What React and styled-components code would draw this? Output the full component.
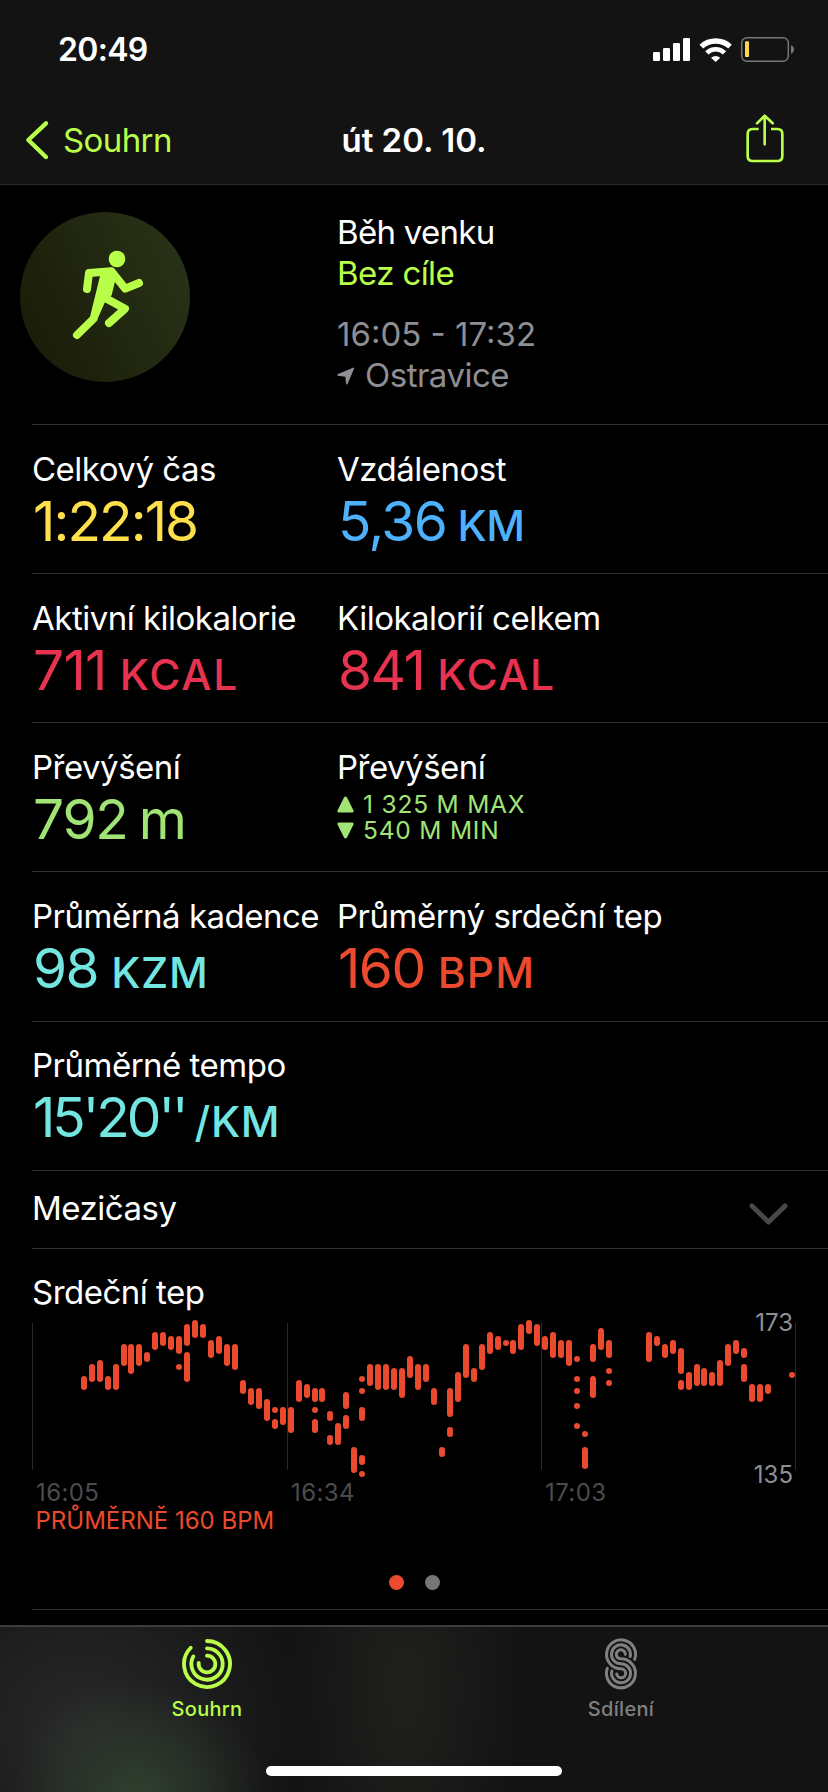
import React, { useState } from "react";
import styled, { createGlobalStyle, css } from "styled-components";

const GlobalStyle = createGlobalStyle`
  * {
    box-sizing: border-box;
  }
  body {
    margin: 0;
    background: #000;
    font-family: Inter, "Liberation Sans", sans-serif;
    color: #fff;
  }
`

const colors = {
  lime: '#b9ff4a',
  yellow: '#fde04c',
  blue: '#4db1fb',
  pink: '#e83350',
  green: '#a0e475',
  cyan: '#74e6e2',
  red: '#eb4a2e',
  gray: '#8e8e93',
}

const Screen = styled.div`
  width: 828px;
  height: 1792px;
  display: flex;
  flex-direction: column;
  overflow: hidden;
  background: #000;
`

const Header = styled.header`
  height: 185px;
  background: #131313;
  border-bottom: 1px solid #2a2a2a;
`

const StatusBar = styled.div`
  height: 96px;
  padding: 30px 33px 0 58px;
  display: flex;
  justify-content: space-between;
  align-items: flex-start;
`

const Clock = styled.span`
  font-size: 32px;
  font-weight: 600;
  line-height: 40px;
  letter-spacing: -0.7px;
`

const StatusIcons = styled.div`
  display: flex;
  align-items: center;
  gap: 8.5px;
  padding-top: 6px;
`

const NavBar = styled.div`
  height: 88px;
  padding: 0 42px 0 24px;
  display: grid;
  grid-template-columns: 1fr auto 1fr;
  align-items: center;
`

const BackButton = styled.button`
  display: flex;
  align-items: center;
  gap: 13px;
  padding: 0;
  border: 0;
  background: none;
  color: ${colors.lime};
  font: 400 33px/40px Inter, sans-serif;
  letter-spacing: -0.6px;
`

const Title = styled.h1`
  margin: 0;
  padding-left: 18px;
  font-size: 33px;
  font-weight: 600;
  line-height: 40px;
`

const ShareButton = styled.button`
  justify-self: end;
  display: flex;
  padding: 0 0 5px;
  border: 0;
  background: none;
`

const Hero = styled.section`
  height: 239px;
  display: grid;
  grid-template-columns: 317px 1fr;
  padding-left: 20px;
`

const Badge = styled.div`
  width: 170px;
  height: 170px;
  margin-top: 27px;
  border-radius: 50%;
  background: linear-gradient(65deg, #1a1c08 10%, #283218 90%);
`

const HeroText = styled.div`
  padding-top: 27px;
`

const Line = styled.div`
  display: flex;
  align-items: center;
  gap: 11px;
  font-size: 33px;
  line-height: 41px;
  letter-spacing: ${({ $spacing }) => $spacing ?? -0.7}px;
  color: ${({ $color }) => $color || '#fff'};
  ${({ $gap }) => $gap && css`
    margin-top: 20px;
  `}
`

const Row = styled.section`
  height: ${({ $height }) => $height || 149}px;
  margin-left: 32px;
  padding-top: ${({ $top }) => $top || 24}px;
  border-top: 1px solid #303031;
  display: grid;
  grid-template-columns: 305px 1fr;
`

const Label = styled.div`
  font-size: 33px;
  line-height: 40px;
  letter-spacing: -0.5px;
  white-space: nowrap;
`

const Value = styled.div`
  margin-top: 2px;
  padding-left: 1px;
  font-size: 55px;
  line-height: 60px;
  letter-spacing: ${({ $spacing }) => $spacing ?? -1.5}px;
  white-space: nowrap;
  color: ${({ $color }) => $color};
`

const Unit = styled.span`
  margin-left: ${({ $gap }) => $gap ?? 13}px;
  font-size: ${({ $large }) => $large ? 55 : 42.5}px;
  font-weight: ${({ $large }) => $large ? 400 : 500};
  letter-spacing: ${({ $spacing }) => $spacing ?? 0.7}px;
`

const Ranges = styled.div`
  padding-top: 4px;
`

const Range = styled.div`
  display: flex;
  align-items: center;
  gap: 9px;
  height: 26px;
  font-size: 24.5px;
  line-height: 26px;
  letter-spacing: 0.8px;
  color: ${colors.green};
`

const Splits = styled.section`
  height: 78px;
  margin-left: 32px;
  padding: 17px 40px 0 0;
  border-top: 1px solid #303031;
  display: flex;
  justify-content: space-between;
  align-items: flex-start;
  svg {
    margin-top: 14px;
  }
`

const HeartRate = styled.section`
  height: 362px;
  margin-left: 32px;
  padding-top: 23px;
  border-top: 1px solid #303031;
  border-bottom: 1px solid #303031;
  display: flex;
  flex-direction: column;
`

const Chart = styled.svg`
  display: block;
  flex: none;
  overflow: visible;
  font-family: Inter, sans-serif;
  font-size: 24px;
`

const Dots = styled.div`
  display: flex;
  gap: 21px;
  margin: 35px 0 0 357px;
`

const Dot = styled.span`
  width: 15px;
  height: 15px;
  border-radius: 50%;
  background: ${({ $active }) => $active ? colors.red : '#767676'};
`

const TabBar = styled.nav`
  height: 167px;
  margin-top: 15px;
  border-top: 2px solid #3c3c3c;
  display: grid;
  grid-template-columns: 1fr 1fr;
  grid-template-rows: 1fr 26px;
  background:
    radial-gradient(ellipse 130px 120px at 138px 172px, rgba(49, 66, 48, 0.95), rgba(49, 66, 48, 0) 100%),
    radial-gradient(ellipse 230px 220px at 80px 100px, rgba(42, 43, 43, 0.9), rgba(42, 43, 43, 0) 100%),
    radial-gradient(ellipse 120px 260px at 405px 60px, rgba(33, 33, 31, 0.9), rgba(33, 33, 31, 0) 100%),
    #131313;
`

const Tab = styled.button`
  display: flex;
  flex-direction: column;
  align-items: center;
  padding: 10px 0 0;
  border: 0;
  background: none;
  font: 500 20px/26px Inter, sans-serif;
  letter-spacing: 0.3px;
  color: ${({ $active }) => $active ? colors.lime : '#808080'};
  svg {
    display: block;
    margin: 0 1px 5px 0;
  }
`

const HomeIndicator = styled.div`
  grid-column: 1 / 3;
  justify-self: center;
  width: 296px;
  height: 10px;
  border-radius: 5px;
  background: #fff;
`

const Signal = () => (
  <svg width="37" height="25" viewBox="717 111 111 75" fill="#fff">
    <rect x="717" y="156" width="21" height="27" rx="4" />
    <rect x="747" y="144" width="21" height="39" rx="4" />
    <rect x="777" y="129" width="21" height="54" rx="4" />
    <rect x="807" y="114" width="21" height="69" rx="4" />
  </svg>
)

const Wifi = () => (
  <svg width="33" height="26" viewBox="855 108 99 78" fill="none" stroke="#fff">
    <path d="M862 137A63 63 0 0 1 948 137" strokeWidth="16" />
    <path d="M878.500 155.500A38 38 0 0 1 931.500 155.500" strokeWidth="14" />
    <path d="M905 183L891 170Q905 160 919 170Z" fill="#fff" stroke="none" />
  </svg>
)

const Battery = () => (
  <svg width="55" height="27" viewBox="978 108 165 81">
    <rect x="983" y="113" width="140" height="71" rx="16" fill="none" stroke="#767676" strokeWidth="4.500" />
    <rect x="993" y="124" width="12" height="47" rx="2" fill="#fbd84a" />
    <path d="M1131 136Q1140 139 1140 148.500T1131 161Z" fill="#767676" />
  </svg>
)

const Share = () => (
  <svg width="42" height="50" viewBox="990 338 126 150" fill="none" stroke={colors.lime} strokeWidth="8" strokeLinecap="round" strokeLinejoin="round">
    <path strokeLinecap="butt" d="M1034 386H1016Q1001 386 1001 401V467Q1001 482 1016 482H1090Q1105 482 1105 467V401Q1105 386 1090 386H1071" />
    <path d="M1052 432V347M1029 369L1052 346L1076 369" />
  </svg>
)

const Runner = () => (
  <svg width="170" height="170" viewBox="60 66 510 510" fill="none" stroke={colors.lime} strokeWidth="24" strokeLinecap="round" strokeLinejoin="round">
    <circle cx="351" cy="207" r="25" fill={colors.lime} stroke="none" />
    <path d="M261 297L267 249L334 244L376 296L417 279" />
    <path d="M320 326L375 356L327 399" />
    <path d="M280 387L231 435" />
    <path d="M303 246L342 246Q350 252 348 262L335 316L314 338L291 391L270 380Z" fill={colors.lime} stroke="none" />
  </svg>
)

const Rings = () => (
  <svg width="52" height="54" viewBox="540 141 156 162" fill="none" stroke="currentColor" strokeWidth="11.500" strokeLinecap="round">
    <path d="M618 153A69 69 0 1 1 569.200 173.200" />
    <path d="M618 175A47 47 0 1 1 577 199.200" />
    <path d="M618 197A25 25 0 1 1 593.200 219" />
  </svg>
)

const SharingIcon = () => (
  <svg width="52" height="54" viewBox="540 141 156 162" fill="none" stroke="currentColor" strokeWidth="9" strokeLinecap="round">
    <path d="M659 208A43.500 43.500 0 1 0 618 236.500A13.500 13.500 0 1 1 605 252" />
    <path d="M645.500 200A28.500 28.500 0 1 0 618 221.500A28.500 28.500 0 1 1 590.500 243" />
    <path d="M631 193A13.500 13.500 0 1 0 618 206.500A43.500 43.500 0 1 1 577 235" />
  </svg>
)

const gridX = [32.5, 287.5, 541.5, 795.5]

// [x, top, bottom, top, bottom, ...]
const beats = [
  [84, 76, 90], [92, 64, 82], [100, 60, 82], [108, 76, 90], [116, 64, 90],
  [124, 44, 66], [131, 44, 74], [139, 44, 66], [147, 52, 62], [155, 32, 50],
  [163, 32, 46], [171, 36, 50], [179, 36, 54, 64, 70], [187, 24, 46, 52, 82],
  [195, 20, 38], [203, 24, 38], [211, 40, 58], [219, 36, 54], [227, 44, 66],
  [235, 44, 70], [243, 80, 94], [251, 88, 105], [259, 88, 109], [267, 99, 121],
  [275, 107, 113, 119, 129], [283, 107, 125], [291, 107, 133], [299, 80, 102],
  [307, 84, 98], [315, 88, 102, 107, 113, 119, 133], [322, 88, 102],
  [330, 111, 121, 135, 145], [338, 123, 145], [346, 92, 109, 115, 129],
  [354, 147, 173], [362, 76, 82, 88, 94, 107, 121, 155, 165, 171, 177],
  [370, 64, 86], [378, 64, 90], [386, 64, 90], [394, 68, 90], [402, 68, 98],
  [410, 56, 78], [418, 64, 90], [426, 64, 82], [434, 88, 105], [442, 147, 157],
  [450, 88, 117, 127, 137], [458, 72, 102], [466, 44, 78], [474, 68, 82],
  [482, 44, 70], [490, 32, 54], [498, 36, 50], [506, 40, 46], [513, 40, 54],
  [521, 24, 50], [529, 20, 34], [537, 24, 46], [545, 36, 50], [553, 32, 58],
  [561, 40, 58], [569, 40, 66], [577, 56, 62, 76, 82, 88, 94, 103, 109, 123, 129],
  [585, 131, 137, 147, 169], [593, 44, 62, 76, 98], [601, 28, 50],
  [609, 40, 58, 68, 74, 80, 86], [649, 32, 62], [657, 36, 46], [665, 44, 58],
  [673, 40, 54], [681, 48, 74, 80, 90], [689, 72, 90], [697, 64, 86],
  [704, 68, 86], [712, 72, 86], [720, 60, 86], [728, 44, 66], [736, 40, 54],
  [744, 48, 58, 64, 82], [752, 84, 102], [760, 84, 102], [768, 84, 94], [792, 72, 78],
]

const HeartChart = () => (
  <Chart width="796" height="228" viewBox="32 12 796 228">
    {gridX.map((x) => <line key={x} x1={x} x2={x} y1="23" y2="170" stroke="#2a2a2a" />)}
    {beats.map(([x, ...spans]) =>
      spans.map((top, i) => i % 2 ? null :
        <rect key={`${x}-${top}`} x={x - 3} y={top} width="6" height={spans[i + 1] - top} rx="3" fill={colors.red} />
      )
    )}
    <text x="793" y="31" textAnchor="end" fill={colors.gray}>173</text>
    <text x="793" y="183" textAnchor="end" fill={colors.gray}>135</text>
    <g fill="#4c4c4e" letterSpacing="0.4">
      <text x="36" y="201">16:05</text>
      <text x="291" y="201">16:34</text>
      <text x="545" y="201">17:03</text>
    </g>
    <text x="35.500" y="229" fill={colors.red}>PRŮMĚRNĚ 160 BPM</text>
  </Chart>
)

const Stat = ({ label, value, unit, color, gap, large, spacing, unitSpacing }) => (
  <div>
    <Label>{label}</Label>
    <Value $color={color} $spacing={spacing}>
      {value}{unit && <Unit $gap={gap} $large={large} $spacing={unitSpacing}>{unit}</Unit>}
    </Value>
  </div>
)

const App = () => {
  const [tab, setTab] = useState('summary');

  return (
    <Screen>
      <GlobalStyle />
      <Header>
        <StatusBar>
          <Clock>20:49</Clock>
          <StatusIcons><Signal /><Wifi /><Battery /></StatusIcons>
        </StatusBar>
        <NavBar>
          <BackButton>
            <svg width="26" height="42" viewBox="72 357 78 126" fill="none" stroke={colors.lime} strokeWidth="13" strokeLinecap="round" strokeLinejoin="round">
              <path d="M138 370L85 420L138 471" />
            </svg>
            Souhrn
          </BackButton>
          <Title>út 20. 10.</Title>
          <ShareButton><Share /></ShareButton>
        </NavBar>
      </Header>

      <Hero>
        <Badge><Runner /></Badge>
        <HeroText>
          <Line>Běh venku</Line>
          <Line $color={colors.lime} $spacing={-0.6}>Bez cíle</Line>
          <Line $color={colors.gray} $gap $spacing={0}>16:05 - 17:32</Line>
          <Line $color={colors.gray} $spacing={-0.5}>
            <svg width="17" height="18" viewBox="51 533 51 54" fill={colors.gray}>
              <path d="M99 535Q103 533 102 538L83 583Q79 589 78 582L76 562L54 559Q49 557 54 554Z" />
            </svg>
            Ostravice
          </Line>
        </HeroText>
      </Hero>

      <Row>
        <Stat label="Celkový čas" value="1:22:18" spacing={-1.9} color={colors.yellow} />
        <Stat label="Vzdálenost" value="5,36" unit="KM" gap={11} unitSpacing={-0.3} color={colors.blue} />
      </Row>
      <Row>
        <Stat label="Aktivní kilokalorie" value="711" unit="KCAL" spacing={-0.7} unitSpacing={1.8} color={colors.pink} />
        <Stat label="Kilokalorií celkem" value="841" unit="KCAL" unitSpacing={1.5} color={colors.pink} />
      </Row>
      <Row>
        <Stat label="Převýšení" value="792" unit="m" large gap={11} spacing={-1.2} color={colors.green} />
        <div>
          <Label>Převýšení</Label>
          <Ranges>
            <Range>
              <svg width="17" height="17" viewBox="0 0 17 17" fill={colors.green}>
                <path d="M7 1.500Q8.500-.5 10 1.500L16.500 14.500Q17 16.500 15 16.500H2Q0 16.500 .5 14.500Z" />
              </svg>
              1 325 M MAX
            </Range>
            <Range>
              <svg width="17" height="17" viewBox="0 0 17 17" fill={colors.green}>
                <path d="M7 15.500Q8.500 17.500 10 15.500L16.500 2.500Q17 .5 15 .5H2Q0 .5 .5 2.500Z" />
              </svg>
              540 M MIN
            </Range>
          </Ranges>
        </div>
      </Row>
      <Row $height={150}>
        <Stat label="Průměrná kadence" value="98" unit="KZM" color={colors.cyan} />
        <Stat label="Průměrný srdeční tep" value="160" unit="BPM" unitSpacing={1.2} color={colors.red} />
      </Row>
      <Row $top={23}>
        <Stat label="Průměrné tempo" value="15'20''" unit="/KM" spacing={-3} gap={9} color={colors.cyan} />
      </Row>

      <Splits>
        <Label>Mezičasy</Label>
        <svg width="40" height="24" viewBox="0 0 40 24" fill="none" stroke="#48484a" strokeWidth="5" strokeLinecap="round" strokeLinejoin="round">
          <path d="M4 4L20.500 20L37 4" />
        </svg>
      </Splits>

      <HeartRate>
        <Label>Srdeční tep</Label>
        <HeartChart />
        <Dots>
          <Dot $active />
          <Dot />
        </Dots>
      </HeartRate>

      <TabBar>
        <Tab $active={tab == 'summary'} onClick={() => setTab('summary')}>
          <Rings />
          Souhrn
        </Tab>
        <Tab $active={tab == 'sharing'} onClick={() => setTab('sharing')}>
          <SharingIcon />
          Sdílení
        </Tab>
        <HomeIndicator />
      </TabBar>
    </Screen>
  )
}

export default App;
